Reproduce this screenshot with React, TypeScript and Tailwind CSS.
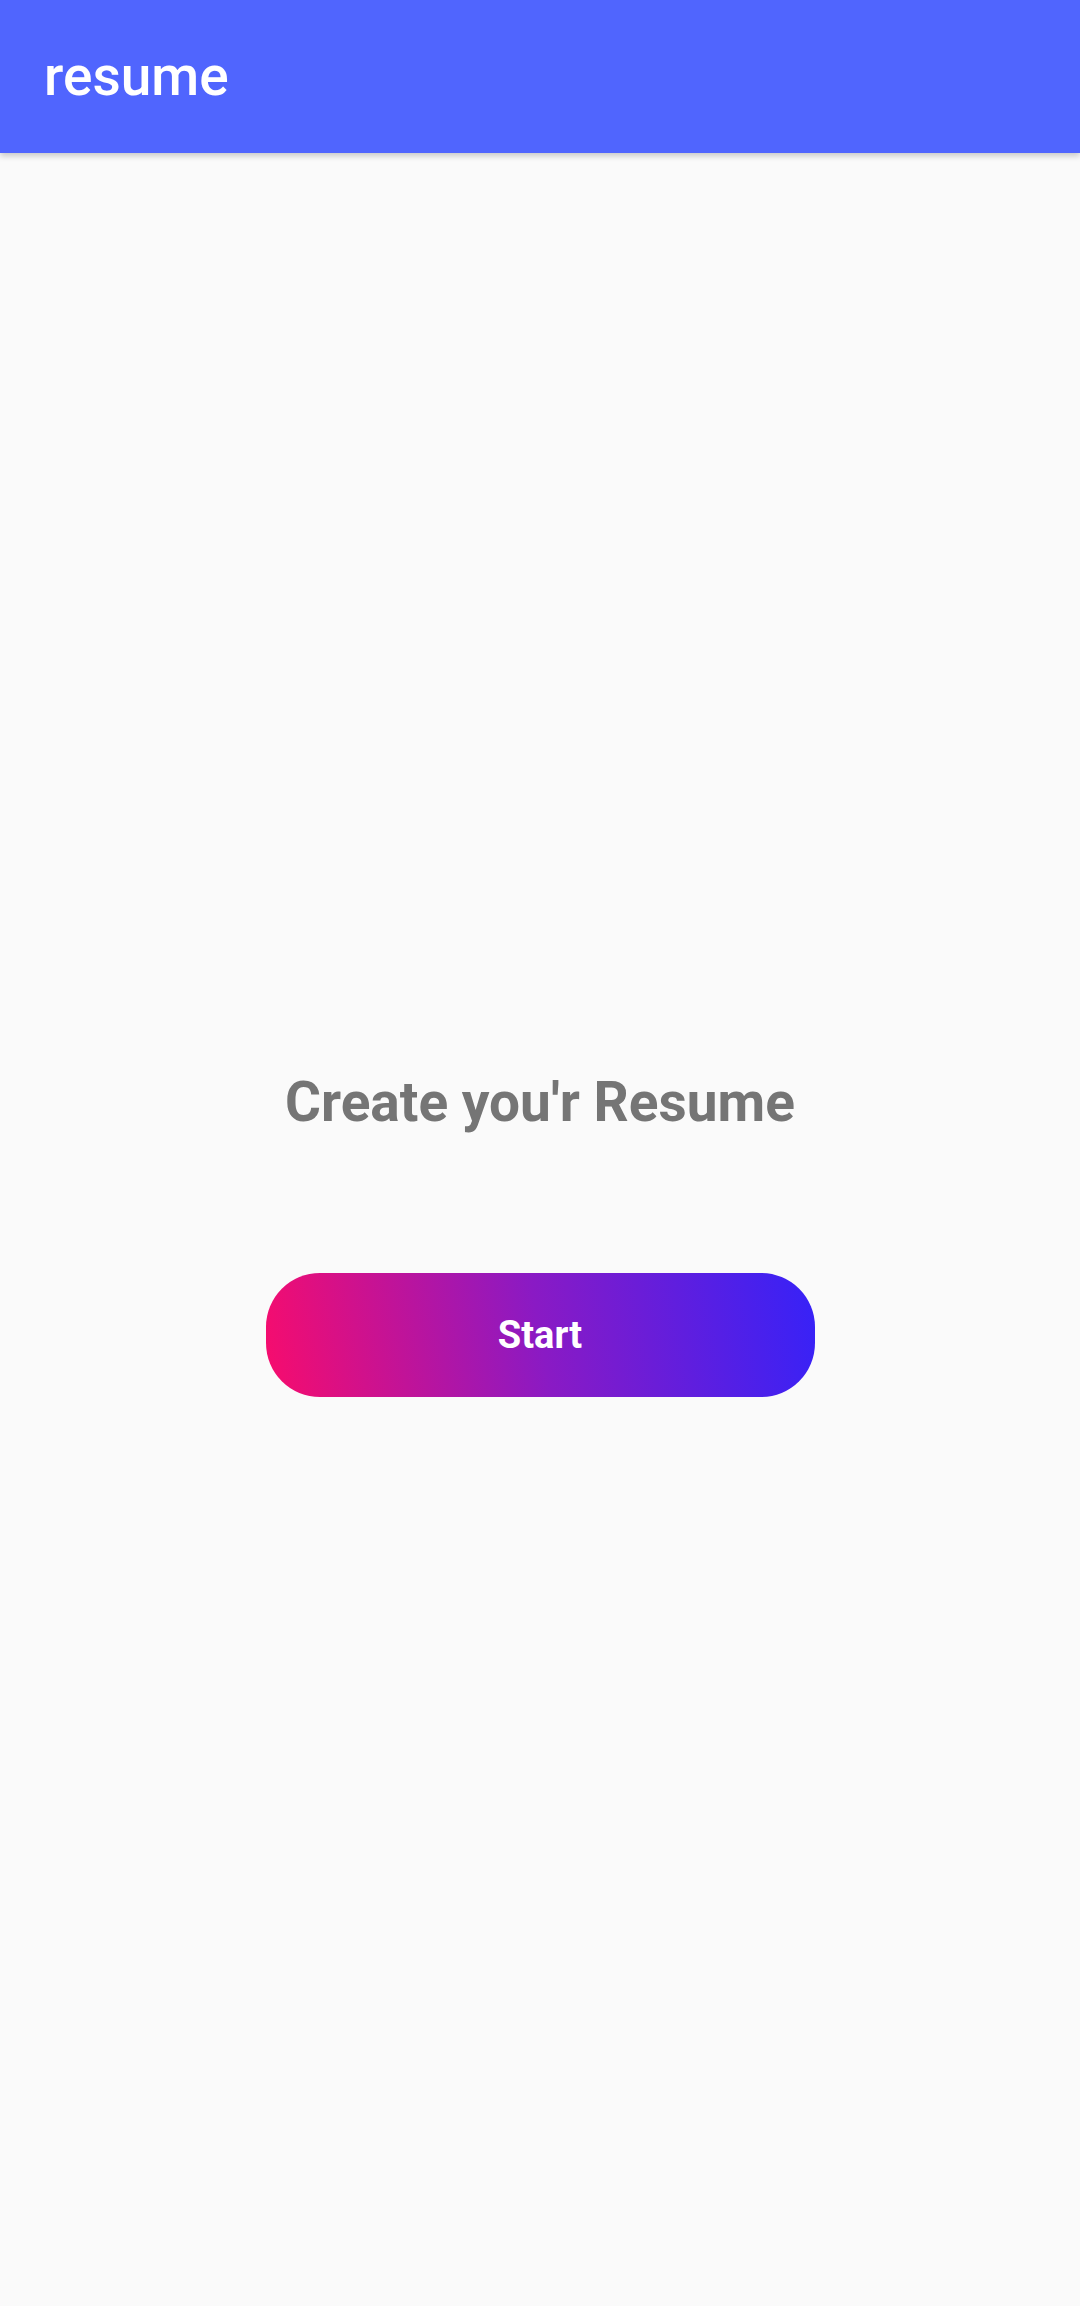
const App = () => {
  return (
    <div
      className="flex h-[2306px] w-[1080px] flex-col bg-[#fafafa]"
      style={{ fontFamily: "Roboto, 'Noto Sans', sans-serif" }}
    >
      <header className="relative z-10 flex h-[153px] shrink-0 items-center bg-[#5065fe] px-[44px] shadow-[0_3px_6px_rgba(0,0,0,0.2)]">
        <h1 className="text-[55px] font-medium leading-none text-white">resume</h1>
      </header>
      <main className="flex flex-1 flex-col items-center justify-center pt-[7px]">
        <h2 className="mb-[138px] text-[55px] font-bold leading-[66px] text-[#757575]">
          Create you'r Resume
        </h2>
        <button className="flex h-[124px] w-[549px] items-center justify-center rounded-[54px] bg-[linear-gradient(80deg,#f80c6c,#8a1ac4_50%,#3622f8)] text-[38px] font-bold text-white">
          Start
        </button>
      </main>
    </div>
  );
};

export default App;
